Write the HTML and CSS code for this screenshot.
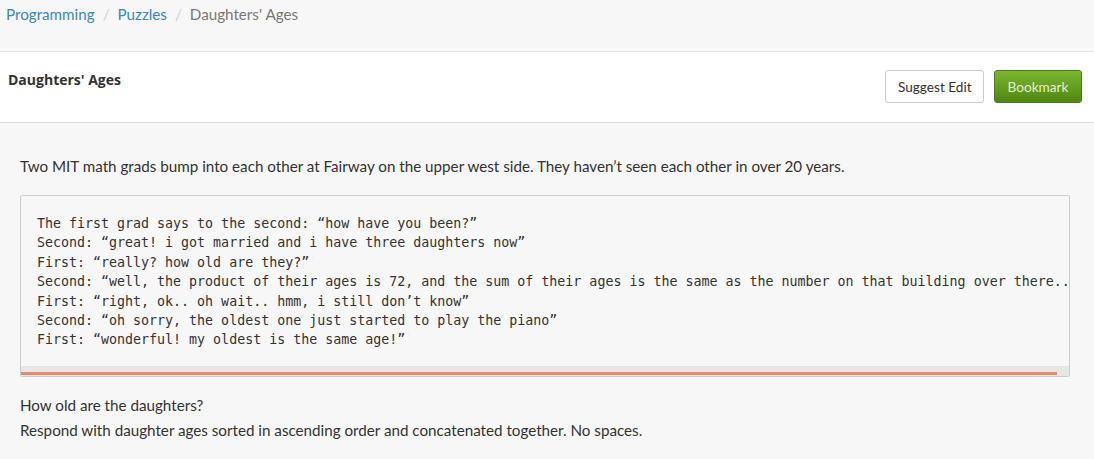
FILE: index.html
```html
<!DOCTYPE html>
<html lang="en">
<head>
<meta charset="utf-8">
<title>Daughters' Ages</title>
<link rel="stylesheet" href="styles.css">
</head>
<body>
<nav class="breadcrumb">
  <a class="crumb-link" href="#">Programming</a>
  <span class="crumb-sep">/</span>
  <a class="crumb-link" href="#">Puzzles</a>
  <span class="crumb-sep">/</span>
  <span class="crumb-current">Daughters' Ages</span>
</nav>
<header class="page-header">
  <h1 class="page-title">Daughters' Ages</h1>
  <div class="actions">
    <button class="btn btn-default">Suggest Edit</button>
    <button class="btn btn-success">Bookmark</button>
  </div>
</header>
<main class="content">
  <p class="intro">Two MIT math grads bump into each other at Fairway on the upper west side. They haven’t seen each other in over 20 years.</p>
  <div class="code-box">
    <pre class="dialog">The first grad says to the second: “how have you been?”
Second: “great! i got married and i have three daughters now”
First: “really? how old are they?”
Second: “well, the product of their ages is 72, and the sum of their ages is the same as the number on that building over there..
First: “right, ok.. oh wait.. hmm, i still don’t know”
Second: “oh sorry, the oldest one just started to play the piano”
First: “wonderful! my oldest is the same age!”</pre>
    <div class="hscroll"><div class="hscroll-thumb"></div></div>
  </div>
  <p class="question">How old are the daughters?</p>
  <p class="question">Respond with daughter ages sorted in ascending order and concatenated together. No spaces.</p>
</main>
</body>
</html>
```
FILE: styles.css
```css
html, body {
  margin: 0;
  padding: 0;
}
body {
  background: #f7f7f7;
  color: #333;
  font-family: Lato, "Open Sans", sans-serif;
  font-size: 15.2px;
}
.breadcrumb {
  height: 52px;
  box-sizing: border-box;
  padding: 2px 6px 0;
  line-height: 24px;
  border-bottom: 1px solid #e4e4e4;
  display: flex;
  align-items: flex-start;
}
.crumb-link {
  color: #3a86c8;
  text-decoration: none;
}
.crumb-sep {
  color: #cfcfcf;
  padding: 0 8px;
}
.crumb-current {
  color: #777;
}
.page-header {
  background: #fff;
  height: 71px;
  box-sizing: border-box;
  padding: 18px 12px 0 8px;
  border-bottom: 1px solid #dedede;
  display: flex;
  justify-content: space-between;
  align-items: flex-start;
}
.page-title {
  margin: 0;
  font-family: "Open Sans", sans-serif;
  font-weight: 700;
  font-size: 14px;
  line-height: 20px;
  color: #333;
}
.actions {
  display: flex;
  gap: 10px;
}
.btn {
  height: 33px;
  box-sizing: border-box;
  border-radius: 3px;
  font-family: Lato, "Open Sans", sans-serif;
  font-size: 13.6px;
  padding: 0 12px;
  white-space: nowrap;
  cursor: pointer;
}
.btn-default {
  width: 99px;
  background: #fff;
  border: 1px solid #cccccc;
  color: #333;
}
.btn-success {
  width: 88px;
  background: linear-gradient(to bottom, #7cb72f 0%, #4d870f 100%);
  border: 1px solid #4b7f14;
  color: #e4f0cf;
}
.content {
  padding: 0 24px 0 20px;
}
.intro {
  margin: 31px 0 0;
  line-height: 24px;
}
.code-box {
  margin: 17px 0 16px;
  border: 1px solid #cccccc;
  border-radius: 2px;
  background: #f7f7f7;
  overflow: hidden;
}
.dialog {
  margin: 0;
  padding: 18px 0 16px 16px;
  font-family: "DejaVu Sans Mono", monospace;
  font-size: 13.3px;
  line-height: 19.4px;
  color: #333;
  overflow: hidden;
  white-space: pre;
}
.hscroll {
  height: 10px;
  background: #e6e6e6;
  box-sizing: border-box;
  padding-top: 6px;
}
.hscroll-thumb {
  width: 98.9%;
  height: 3px;
  background: #e88a67;
}
.question {
  margin: 0;
  line-height: 25px;
}
```
